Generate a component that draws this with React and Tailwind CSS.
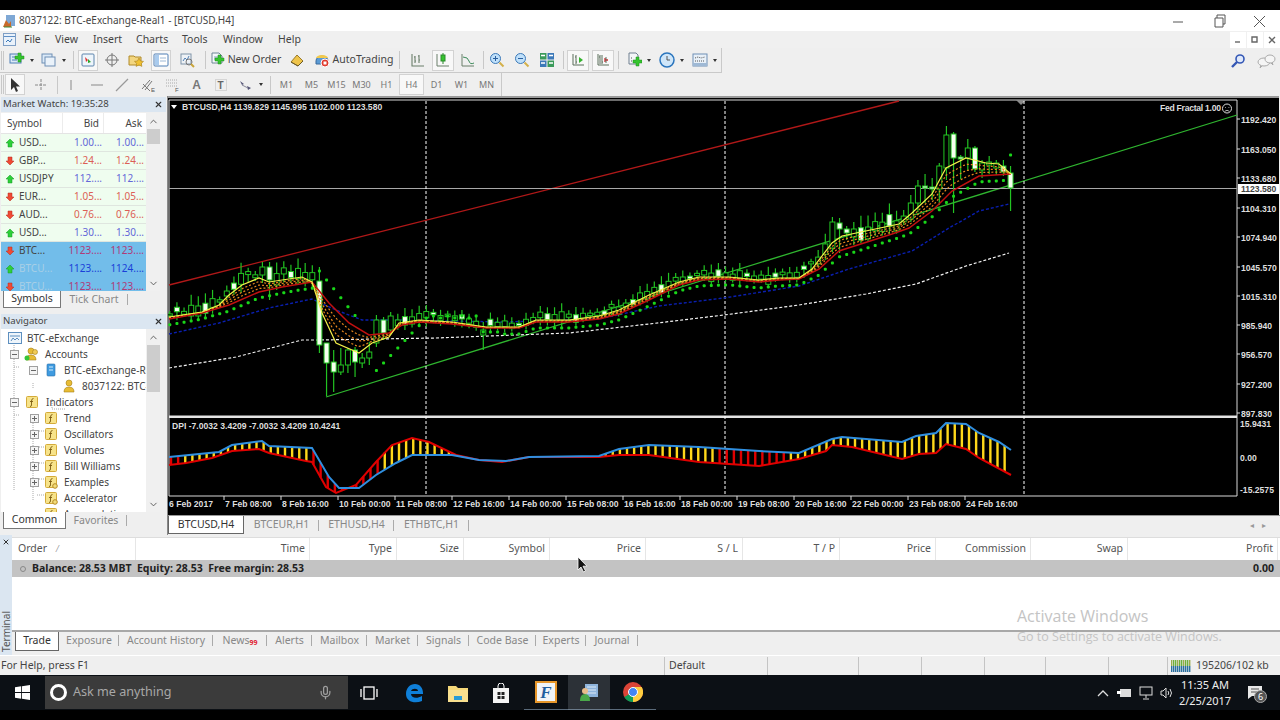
import React from "react";
import { X, ChevronUp, ChevronDown, Mic } from "lucide-react";

// --- chart data, all in page pixels (the svg viewBox starts at 169,96) ---
const YELLOW = [[170,317],[203,312],[220,305],[230,295],[243,285],[260,278],[270,282],[303,277],[313,282],[323,313],[337,343],[360,353],[373,343],[390,337],[400,323],[420,320],[453,322],[487,327],[520,327],[537,320],[570,320],[600,316],[620,310],[650,295],[680,282],[700,277],[730,277],[760,280],[780,278],[800,278],[813,269],[833,243],[843,236],[900,224],[913,213],[933,194],[947,168],[967,158],[987,163],[1000,164],[1012,174]];
const RED = [[170,319],[203,313],[230,305],[260,292],[283,287],[313,282],[330,303],[350,323],[370,335],[390,333],[403,325],[420,322],[453,324],[487,328],[520,328],[537,322],[570,322],[600,319],[620,314],[650,300],[680,285],[700,280],[730,279],[760,282],[780,280],[800,279],[820,269],[840,251],[893,234],[910,228],[933,211],[953,191],[980,176],[1012,174]];
const BLUE = [[170,334],[220,323],[270,308],[313,299],[337,310],[363,320],[403,320],[503,322],[600,319],[660,306],[725,298],[800,286],[850,269],[913,251],[950,228],[980,211],[1010,204]];
const WHITE = [[170,368],[237,357],[303,340],[320,340],[437,338],[570,333],[650,324],[725,315],[800,305],[867,294],[917,284],[967,266],[1010,253]];
const IND_BLUE = [[170,457],[220,452],[233,445],[263,441],[270,446],[313,448],[330,477],[340,488],[360,488],[377,475],[397,463],[413,455],[453,455],[480,460],[507,461],[530,457],[600,456],[620,449],[650,445],[700,447],[760,451],[800,453],[833,439],[843,437],[903,442],[917,436],[937,433],[947,423],[967,424],[980,433],[1000,442],[1012,450]];
const IND_RED = [[170,465],[187,463],[213,458],[233,451],[260,449],[270,453],[307,461],[313,462],[327,487],[337,493],[357,485],[377,462],[393,445],[413,438],[430,442],[457,455],[480,460],[503,462],[530,457],[600,457],[620,455],[650,455],[700,462],[760,466],[800,459],[827,451],[833,445],[853,447],[903,459],[920,454],[937,453],[947,444],[967,449],[980,458],[1012,475]];

const at = (pts, x) => {
  if (x <= pts[0][0]) return pts[0][1];
  for (let i = 1; i < pts.length; i++) {
    if (x <= pts[i][0]) {
      const t = (x - pts[i - 1][0]) / (pts[i][0] - pts[i - 1][0]);
      return pts[i - 1][1] + t * (pts[i][1] - pts[i - 1][1]);
    }
  }
  return pts[pts.length - 1][1];
};
const line = (pts) => pts.map((p) => p.join(",")).join(" ");
const sampled = (fn, x0, x1) => {
  const out = [];
  for (let x = x0; x <= x1; x += 3) out.push([x, fn(x)]);
  return out;
};

const BARS = 119;
const barX = (i) => 170.8 + i * 7.125;

// hand read candles: x -> [top, bottom, wickTop, wickBottom, white]
const SPECIAL = {
  262: [267, 275, 262, 283, false], 269: [267, 280, 262, 300, true], 319: [281, 345, 267, 353, true],
  326: [343, 363, 343, 396, true], 333: [362, 372, 350, 392, true], 340: [365, 372, 348, 375, false],
  347: [350, 365, 348, 373, false], 354: [350, 362, 347, 377, true], 361: [358, 363, 353, 368, false],
  368: [352, 358, 342, 365, false], 376: [320, 343, 315, 347, false], 383: [320, 333, 317, 340, true],
  390: [316, 330, 312, 335, false], 483: [330, 335, 322, 350, false],
  833: [222, 248, 217, 252, false], 840: [223, 229, 218, 253, true], 847: [229, 233, 226, 240, true], 854: [229, 237, 222, 245, false],
  912: [203, 219, 195, 222, false], 919: [186, 203, 180, 212, false], 926: [186, 188, 174, 203, true], 933: [187, 189, 178, 200, true],
  940: [166, 189, 163, 205, false], 947: [135, 168, 126, 180, false], 954: [134, 158, 132, 213, true], 961: [157, 159, 155, 179, true],
  968: [148, 158, 139, 171, false], 976: [148, 169, 146, 172, true], 983: [163, 170, 160, 178, false], 990: [162, 165, 156, 174, false],
  997: [163, 168, 160, 175, false], 1004: [166, 172, 160, 176, true], 1011: [173, 188, 166, 211, true],
};

const candles = () => {
  const out = [];
  for (let i = 0; i < BARS; i++) {
    const x = barX(i);
    const key = Object.keys(SPECIAL).find((k) => Math.abs(k - x) < 3.6);
    let c;
    if (key) c = SPECIAL[key];
    else {
      const m = at(YELLOW, x);
      const a = Math.sin(i * 12.9898) * 43758.5453;
      const r = a - Math.floor(a);
      const b = Math.sin(i * 78.233) * 12543.17;
      const s = b - Math.floor(b);
      const big = x > 820 && x < 900 ? 1.5 : x > 190 && x < 315 ? 1.6 : 1;
      const top = m - 3 - r * 6 * big;
      const bot = top + 2 + s * 7 * big;
      c = [top, bot, top - 3 - s * 6 * big, bot + 2 + r * 7, i % 4 === 1];
    }
    out.push({ x, c });
  }
  return out;
};

const sarDots = () => {
  const out = [];
  for (let i = 0; i < BARS; i++) {
    const x = barX(i);
    let y;
    if (x < 316) y = at(RED, x) + 6;
    else if (x < 360) y = 268 + (x - 318) * 1.25;
    else if (x < 375) continue;
    else if (x < 425) y = 373 - (x - 375) * 1.05;
    else if (x < 480) y = 318 - (i % 2) * 2;
    else if (x < 500) y = 332;
    else if (x < 1005) y = at(RED, x) + 6;
    else y = 155;
    out.push([x, y]);
  }
  return out;
};

const PRICES = [["1192.420",120],["1163.050",150],["1133.680",179],["1104.310",209],["1074.940",238],["1045.570",268],["1015.310",297],["985.940",326],["956.570",355],["927.200",385],["897.830",414]];
const DATES = ["7 Feb 08:00","8 Feb 16:00","10 Feb 00:00","11 Feb 08:00","12 Feb 16:00","14 Feb 00:00","15 Feb 08:00","16 Feb 16:00","18 Feb 00:00","19 Feb 08:00","20 Feb 16:00","22 Feb 00:00","23 Feb 08:00","24 Feb 16:00"];

const Chart = () => {
  const labelFont = { fontFamily: "'Liberation Sans', sans-serif", fontSize: 8.6, fill: "#dedede", fontWeight: 700 };
  const bars = [];
  for (let x = 172; x <= 1012; x += 7.125) {
    const a = at(IND_BLUE, x);
    const b = at(IND_RED, x);
    const isRed = x < 186 || (x > 313 && x < 385) || (x > 455 && x < 600) || (x > 715 && x < 790) || x > 1008;
    bars.push(<line key={x} x1={x} x2={x} y1={a} y2={b} stroke={isRed ? "#e00000" : "#ffd81a"} strokeWidth="2.4" />);
  }
  return (
    <svg width="1111" height="419" viewBox="169 96 1111 419" className="block">
      <rect x="169" y="96" width="1111" height="419" fill="#000" />
      <rect x="169" y="96" width="1111" height="2" fill="#9a9a9a" />
      <polyline points="170,100 1238,100 1238,496 170,496 170,100" fill="none" stroke="#d8d8d8" strokeWidth="1" />
      <rect x="170" y="415.5" width="1068" height="2.5" fill="#e4e4e4" />
      <path d="M1017 100h10l-5 5z" fill="#8a8a8a" />

      <line x1="170" y1="285" x2="900" y2="101" stroke="#b01818" strokeWidth="1.3" />
      <line x1="327" y1="397" x2="1238" y2="115" stroke="#2fb52f" strokeWidth="1.3" />
      <line x1="170" y1="188.5" x2="1238" y2="188.5" stroke="#a8a8a8" strokeWidth="1" />
      {[427, 726, 1025].map((x) => (
        <line key={x} x1={x} x2={x} y1="101" y2="496" stroke="#fff" strokeWidth="1" strokeDasharray="3 2" />
      ))}

      <polyline points={line(BLUE)} fill="none" stroke="#0a1fb0" strokeWidth="1.4" strokeDasharray="3 2" />
      <polyline points={line(WHITE)} fill="none" stroke="#f2f2f2" strokeWidth="1.2" strokeDasharray="3 2" />

      {candles().map(({ x, c }) => (
        <g key={x}>
          <line x1={x} x2={x} y1={c[2]} y2={c[3]} stroke="#22c322" strokeWidth="1.2" />
          <rect x={x - 2.5} y={c[0]} width="5" height={c[1] - c[0]} fill={c[4] ? "#f6fff0" : "#000"} stroke="#22c322" strokeWidth="1" />
        </g>
      ))}

      {[0.25, 0.5, 0.75].map((t) => (
        <polyline key={t} points={line(sampled((x) => at(YELLOW, x) + (at(RED, x) - at(YELLOW, x)) * t, 170, 1012))} fill="none" stroke="#e8871e" strokeWidth="1.2" strokeDasharray="2 2" />
      ))}
      <polyline points={line(RED)} fill="none" stroke="#c01010" strokeWidth="1.5" />
      <polyline points={line(YELLOW)} fill="none" stroke="#f4f04a" strokeWidth="1.2" />
      {sarDots().map(([x, y]) => (
        <rect key={x} x={x - 1.5} y={y - 1.5} width="3" height="3" rx="1" fill="#19d619" />
      ))}

      <text x="183" y="110" {...labelFont}>BTCUSD,H4  1139.829 1145.995 1102.000 1123.580</text>
      <path d="M172 105h6l-3 4z" fill="#fff" />
      <text x="1161" y="111" {...labelFont} textLength="61">Fed Fractal 1.00</text>
      <circle cx="1228" cy="108.500" r="4.500" fill="none" stroke="#ddd" />
      <path d="M1226 107.500h.8M1229.500 107.500h.8M1225.800 111.300q2.200-2 4.500 0" stroke="#ddd" fill="none" strokeWidth=".8" />

      <text x="173" y="429" {...labelFont}>DPI -7.0032 3.4209 -7.0032 3.4209 10.4241</text>
      {bars}
      <polyline points={line(IND_RED)} fill="none" stroke="#e00000" strokeWidth="2" />
      <polyline points={line(IND_BLUE)} fill="none" stroke="#2f8fe0" strokeWidth="2" />

      {PRICES.map(([p, y]) => (
        <g key={p}>
          <line x1="1238" x2="1241" y1={y - 1} y2={y - 1} stroke="#ddd" />
          <text x="1242" y={y + 3} {...labelFont}>{p}</text>
        </g>
      ))}
      <rect x="1239" y="184" width="41" height="10" fill="#fff" />
      <text x="1242" y="192" {...labelFont} fill="#444">1123.580</text>
      <text x="1241" y="427" {...labelFont}>15.9431</text>
      <text x="1241" y="461" {...labelFont}>0.00</text>
      <text x="1241" y="493" {...labelFont}>-15.2575</text>

      <text x="170" y="507" {...labelFont}>6 Feb 2017</text>
      {DATES.map((d, i) => {
        const x = 226 + i * 57;
        return (
          <g key={d}>
            <line x1={x - 1} x2={x - 1} y1="496" y2="500" stroke="#ddd" />
            <text x={x} y="507" {...labelFont}>{d}</text>
          </g>
        );
      })}
    </svg>
  );
};

// --- toolbar icons ---
const S = ({ children, w = 16, h = 16 }) => (
  <svg width={w} height={h} viewBox={`0 0 ${w} ${h}`}>{children}</svg>
);
const Plus = ({ x = 8, y = 8 }) => (
  <path d={`M${x} ${y}h3v-3h3v3h3v3h-3v3h-3v-3h-3z`} transform="translate(-2 -2)" fill="#35c42e" stroke="#1c8f1c" strokeWidth=".5" />
);
const ICONS = {
  newChart: <S><rect x="1" y="2" width="11" height="9" fill="#dbe9f7" stroke="#4f7fb5" /><path d="M3 5h7M3 8h5" stroke="#4f7fb5" /><Plus x={8} y={6} /></S>,
  profiles: <S><rect x="1" y="2" width="10" height="9" fill="#dbe9f7" stroke="#6f8fb5" /><rect x="4" y="5" width="10" height="9" fill="#eaf2fa" stroke="#6f8fb5" /></S>,
  market: <S><rect x="2" y="2" width="12" height="12" rx="1" fill="#eef5fb" stroke="#5d84ad" /><path d="M5 5l3 3-2 2z" fill="#d33" /><path d="M8 7l3 3-3 1z" fill="#2aa52a" /></S>,
  cross: <S><circle cx="8" cy="8" r="5" fill="none" stroke="#777" /><path d="M8 1v14M1 8h14" stroke="#777" /></S>,
  navigator: <S><path d="M1 4h5l1 1h6v8H1z" fill="#f3d680" stroke="#b08a2a" /><path d="M11 6l1.500 3 3 .4-2.200 2 .6 3-2.900-1.500-2.900 1.500.6-3-2.200-2 3-.4z" fill="#f1c232" stroke="#a8801c" strokeWidth=".6" /></S>,
  terminal: <S><rect x="1" y="2" width="14" height="12" rx="1" fill="#fff" stroke="#4f7fb5" /><rect x="2" y="3" width="4" height="10" fill="#a9cbee" /><path d="M7 6h6M7 9h6" stroke="#9db8d5" /></S>,
  tester: <S><rect x="2" y="2" width="10" height="10" fill="#eef2f6" stroke="#7f93a8" /><path d="M4 9l2-3 2 2 2-4" fill="none" stroke="#4f7fb5" /><circle cx="10" cy="10" r="3" fill="none" stroke="#777" /><path d="M12 12l3 3" stroke="#c9a53a" strokeWidth="2" /></S>,
  order: <S><path d="M3 1h7l3 3v7H3z" fill="#f4f8fb" stroke="#6f8796" /><path d="M5 5h5M5 7h5" stroke="#7f9fb5" /><Plus x={8} y={8} /></S>,
  editor: <S><path d="M2 10l6-7 6 6-5 5z" fill="#efc44a" stroke="#9a7a2a" /><path d="M2 10l7 4 5-5" fill="none" stroke="#6a5a2a" /></S>,
  auto: <S><path d="M2 9a6 5 0 0 1 12 0v3H2z" fill="#5b9bd5" stroke="#3b6a9c" /><path d="M2 6a6 3 0 0 1 12 0" fill="#f2c94c" /><circle cx="11" cy="11" r="4" fill="#e03a2e" stroke="#fff" /><rect x="9.500" y="9.500" width="3" height="3" fill="#fff" /></S>,
  bars: <S><path d="M2 2v12h12M5 4v7M4 5h1M5 9h1M9 3v8M8 4h1M9 8h1" fill="none" stroke="#6b7f6b" strokeWidth="1.100" /></S>,
  candle: <S><path d="M2 2v12h12" fill="none" stroke="#6b7f6b" /><path d="M8 1v11" stroke="#2a8a2a" /><rect x="6" y="3" width="4" height="6" fill="#35c42e" stroke="#2a8a2a" /></S>,
  lineChart: <S><path d="M2 2v12h12" fill="none" stroke="#6b7f6b" /><path d="M3 5q5 0 6 4t5 2" fill="none" stroke="#3c8a5a" /></S>,
  zoomIn: <S><circle cx="6.500" cy="6.500" r="5" fill="#bfe0fa" stroke="#3c79b8" /><path d="M4 6.500h5M6.500 4v5" stroke="#2a5f9f" /><path d="M10.500 10.500l4 4" stroke="#d3b04a" strokeWidth="2" /></S>,
  zoomOut: <S><circle cx="6.500" cy="6.500" r="5" fill="#bfe0fa" stroke="#3c79b8" /><path d="M4 6.500h5" stroke="#2a5f9f" /><path d="M10.500 10.500l4 4" stroke="#d3b04a" strokeWidth="2" /></S>,
  tile: <S><rect x="1" y="1" width="6.500" height="6.500" fill="#3a9a5a" /><rect x="8.500" y="1" width="6.500" height="6.500" fill="#3c79b8" /><rect x="1" y="8.500" width="6.500" height="6.500" fill="#3c79b8" /><rect x="8.500" y="8.500" width="6.500" height="6.500" fill="#3a9a5a" /><path d="M2 3.500h4M10 3.500h4M2 11h4M10 11h4" stroke="#fff" strokeWidth="1.500" /></S>,
  autoscroll: <S><path d="M3 2v11h11M6 3v9M5 5h1M6 10h1" fill="none" stroke="#5a6f5a" /><path d="M9 5l4 3-4 3z" fill="#35b42e" /></S>,
  shift: <S><path d="M3 2v11h11M5 3v9M4 5h1M7 3v9M7 10h1" fill="none" stroke="#5a6f5a" /><path d="M13 8h-3M10 6v4" stroke="#d3262e" strokeWidth="1.300" /><path d="M11 5v6" stroke="#5a6f5a" /></S>,
  template: <S><path d="M3 1h7l2 2v9H3z" fill="#f4f6f8" stroke="#6f7f8f" /><path d="M5 6h1M5 9h1" stroke="#555" /><Plus x={9} y={10} /></S>,
  clock: <S><circle cx="8" cy="8" r="7" fill="#cfe6f9" stroke="#2a75bd" strokeWidth="1.500" /><path d="M8 4v4h3" fill="none" stroke="#555" /></S>,
  period: <S><rect x="1" y="2" width="14" height="12" fill="#e8f0f8" stroke="#6f8fb5" /><path d="M3 6l3-1 3 1 4-1M3 9h10" fill="none" stroke="#555" strokeDasharray="1 1" /><rect x="1" y="11" width="14" height="3" fill="#9fb9d5" /></S>,
  arrow: <S><path d="M4 1v12l3-3 2 5 2-1-2-4.500h4z" fill="#333" /></S>,
  crossThin: <S><path d="M8 2v12M2 8h12" stroke="#888" strokeDasharray="3 1" /></S>,
  vline: <S><path d="M8 3v10" stroke="#999" strokeWidth="1.200" /></S>,
  hline: <S><path d="M2 8h12" stroke="#999" strokeWidth="1.200" /></S>,
  trend: <S><path d="M2 14L14 2" stroke="#999" strokeWidth="1.200" /></S>,
  channel: <S><path d="M2 12L10 3M5 13l7-9M3 7l7 7" stroke="#777" /><text x="11" y="15" fontSize="6" fill="#555" fontFamily="Liberation Sans">E</text></S>,
  fib: <S><path d="M2 3h11M2 6h11M2 9h11" stroke="#aaa" strokeDasharray="1 1" /><text x="11" y="15" fontSize="6" fill="#555" fontFamily="Liberation Sans">F</text></S>,
  a: <span className="text-[12px] font-bold text-[#777] font-['Liberation_Sans']">A</span>,
  t: <S><rect x="2.500" y="2.500" width="11" height="11" fill="none" stroke="#bbb" strokeDasharray="1 1" /><text x="4.500" y="12" fontSize="10" fontWeight="700" fill="#666" fontFamily="Liberation Sans">T</text></S>,
  arrows: <S><path d="M2 4l4 3-2 1zM9 9l4 2-3 2z" fill="#557" /><path d="M4 8l6 3" stroke="#889" /></S>,
};

const Drop = () => <span className="ml-[3px] w-0 h-0 border-x-[2.5px] border-x-transparent border-t-[3px] border-t-[#333]" />;
const Sep = ({ c = "w-[9px]" }) => (
  <span className={`${c} h-full flex items-center justify-center shrink-0`}>
    <span className="w-[1px] h-[18px] bg-[#c8c8c8] shrink-0" />
  </span>
);

const Tool = ({ icon, w, on, drop, label }) => (
  <span className={`${w} h-[21px] flex items-center justify-center shrink-0 gap-[2px] ${on ? "bg-[#f8f8f8] border border-[#d2d2d2]" : ""}`}>
    {ICONS[icon]}
    {label && <span className="text-[10.5px] text-[#444] ml-[1px] whitespace-nowrap">{label}</span>}
    {drop && <Drop />}
  </span>
);

const Grip = () => <span className="w-[3px] h-[19px] ml-[1px] mr-[1px] border-x border-[#c8c8c8] shrink-0" />;

const Toolbar1 = () => (
  <div className="h-[25px] bg-[#efefef] flex items-center">
    <div className="flex items-center h-[25px] border-r border-b border-[#c9c9c9]">
      <Grip />
      <Tool icon="newChart" w="w-[33px]" drop />
      <Tool icon="profiles" w="w-[31px]" drop />
      <Sep c="w-[9px]" />
      <Tool icon="market" w="w-[20px]" on />
      <Tool icon="cross" w="w-[27px]" />
      <Tool icon="navigator" w="w-[22px]" />
      <span className="w-[4px] shrink-0" />
      <Tool icon="terminal" w="w-[20px]" on />
      <Tool icon="tester" w="w-[32px]" />
      <Sep c="w-[5px]" />
      <Tool icon="order" w="w-[74px]" label="New Order" />
      <Tool icon="editor" w="w-[30px]" />
      <Tool icon="auto" w="w-[83px]" label="AutoTrading" />
      <Sep c="w-[9px]" />
      <Tool icon="bars" w="w-[28px]" />
      <Tool icon="candle" w="w-[22px]" on />
      <Tool icon="lineChart" w="w-[28px]" />
      <Sep c="w-[3px]" />
      <Tool icon="zoomIn" w="w-[24px]" />
      <Tool icon="zoomOut" w="w-[26px]" />
      <Tool icon="tile" w="w-[24px]" />
      <Sep c="w-[8px]" />
      <Tool icon="autoscroll" w="w-[22px]" on />
      <span className="w-[3px] shrink-0" />
      <Tool icon="shift" w="w-[22px]" on />
      <Sep c="w-[8px]" />
      <Tool icon="template" w="w-[32px]" drop />
      <Tool icon="clock" w="w-[34px]" drop />
      <Tool icon="period" w="w-[33px]" drop />
    </div>
    <div className="ml-auto flex items-center gap-[10px] pr-[4px]">
      <svg width="16" height="16" viewBox="0 0 16 16"><circle cx="10" cy="6" r="4" fill="#dfe9fb" stroke="#3457b5" strokeWidth="1.600" /><path d="M7 9l-5 5" stroke="#3457b5" strokeWidth="2.400" /></svg>
      <svg width="20" height="16" viewBox="0 0 20 16"><ellipse cx="8" cy="9" rx="6" ry="4" fill="#f5f5f5" stroke="#aaa" /><ellipse cx="14" cy="6" rx="5" ry="4" fill="#f5f5f5" stroke="#aaa" /><path d="M6 13l-2 2 1-3M15 10l2 2-1-3" fill="#eee" stroke="#aaa" /></svg>
    </div>
  </div>
);

const TF = ({ t, on }) => (
  <span className={`w-[25px] h-[21px] flex items-center justify-center shrink-0 text-[9px] text-[#777] ${on ? "bg-[#f8f8f8] border border-[#d2d2d2]" : ""}`}>{t}</span>
);

const Toolbar2 = () => (
  <div className="h-[23px] bg-[#efefef] flex items-center">
    <div className="flex items-center h-[23px] border-r border-[#c9c9c9]">
      <Grip />
      <Tool icon="arrow" w="w-[20px]" on />
      <Tool icon="crossThin" w="w-[31px]" />
      <Sep c="w-[2px]" />
      <Tool icon="vline" w="w-[26px]" />
      <Tool icon="hline" w="w-[25px]" />
      <Tool icon="trend" w="w-[26px]" />
      <Tool icon="channel" w="w-[25px]" />
      <Tool icon="fib" w="w-[24px]" />
      <Tool icon="a" w="w-[25px]" />
      <Tool icon="t" w="w-[24px]" />
      <Tool icon="arrows" w="w-[34px]" drop />
      <Sep c="w-[7px]" />
      <TF t="M1" />
      <TF t="M5" />
      <TF t="M15" />
      <TF t="M30" />
      <TF t="H1" />
      <TF t="H4" on />
      <TF t="D1" />
      <TF t="W1" />
      <TF t="MN" />
      <span className="w-[2px]" />
    </div>
  </div>
);

const PanelHead = ({ title }) => (
  <div className="h-[15px] flex items-center bg-[#dbe6f1] ml-[1px] mr-[1px] pl-[2px] text-[9.6px] text-[#444] shrink-0">
    <span className="flex-1">{title}</span>
    <X size={9} strokeWidth={3} className="text-[#333] mr-[3px]" />
  </div>
);

const ScrollBar = ({ thumb }) => (
  <div className="w-[14px] flex flex-col items-center bg-[#f0f0f0] shrink-0">
    <ChevronUp size={11} strokeWidth={2} className="text-[#555] mt-[3px] mb-[2px]" />
    <div className={`${thumb} w-[13px] bg-[#cdcdcd]`} />
    <ChevronDown size={11} strokeWidth={2} className="text-[#555] mt-auto mb-[2px]" />
  </div>
);

const BlockArrow = ({ up }) => (
  <svg width="10" height="10" viewBox="0 0 10 10" className="shrink-0">
    {up ? <path d="M5 1l4 4H7v4H3V5H1z" fill="#2ecf3a" stroke="#179a24" strokeWidth=".5" /> : <path d="M5 9L1 5h2V1h4v4h2z" fill="#ef4a34" stroke="#b52a1c" strokeWidth=".5" />}
  </svg>
);

const QUOTES = [
  ["USD...", "1.00...", "1.00...", true, 0],
  ["GBP...", "1.24...", "1.24...", false, 0],
  ["USDJPY", "112....", "112....", true, 0],
  ["EUR...", "1.05...", "1.05...", false, 0],
  ["AUD...", "0.76...", "0.76...", false, 0],
  ["USD...", "1.30...", "1.30...", true, 0],
  ["BTC...", "1123....", "1123....", false, 1],
  ["BTCU...", "1123....", "1124....", true, 2],
  ["BTCU...", "1123....", "1123....", false, 2],
];

const MarketWatch = () => (
  <div className="h-[211px] flex flex-col">
    <PanelHead title="Market Watch: 19:35:28" />
    <div className="h-[178px] flex ml-[1px] mt-[1px] overflow-hidden">
      <div className="w-[145px] overflow-hidden bg-white text-[10px]">
        <div className="h-[21px] flex items-center text-[#444] border-b border-[#e4e4e4]">
          <span className="w-[62px] pl-[6px] border-r border-[#ececec] h-full flex items-center">Symbol</span>
          <span className="w-[41px] pr-[4px] text-right border-r border-[#ececec] h-full flex items-center justify-end">Bid</span>
          <span className="w-[42px] pr-[4px] flex items-center justify-end">Ask</span>
        </div>
        {QUOTES.map(([s, b, a, up, sel], i) => {
          const bg = sel ? "bg-[#72bdea] border-[#72bdea]" : "bg-[#effdef] border-[#dfe6df]";
          const sym = sel === 2 ? "text-[#a8cfe6]" : "text-[#444]";
          const col = sel ? (up ? "text-[#1a3fd8]" : "text-[#b03a78]") : up ? "text-[#6467d8]" : "text-[#dc5f55]";
          return (
            <div key={i} className={`h-[18px] flex items-center border-b ${bg}`}>
              <span className={`w-[62px] pl-[4px] flex items-center gap-[4px] ${sym}`}><BlockArrow up={up} />{s}</span>
              <span className={`w-[41px] pr-[2px] text-right ${col}`}>{b}</span>
              <span className={`w-[42px] pr-[2px] text-right ${col}`}>{a}</span>
            </div>
          );
        })}
      </div>
      <ScrollBar thumb="h-[15px]" />
    </div>
    <div className="h-[17px] flex items-start pl-[3px] text-[10.5px]">
      <span className="w-[58px] h-[17px] bg-white border-x border-b border-[#777] rounded-b-[1px] flex items-center justify-center text-[#333]">Symbols</span>
      <span className="w-[66px] text-center text-[#888] leading-[16px]">Tick Chart</span>
      <span className="w-[1px] h-[11px] mt-[3px] bg-[#aaa]" />
    </div>
  </div>
);

const Box = ({ plus }) => (
  <svg width="9" height="9" viewBox="0 0 9 9" className="shrink-0">
    <rect x=".5" y=".5" width="8" height="8" fill="#f4f4f4" stroke="#a0a0a0" />
    <path d={plus ? "M2 4.500h5M4.500 2v5" : "M2 4.500h5"} stroke="#666" />
  </svg>
);

const FBox = ({ dot }) => (
  <svg width="13" height="13" viewBox="0 0 13 13" className="shrink-0">
    <rect x=".5" y=".5" width="11" height="11" rx="1" fill="#f7e38a" stroke="#d4ab3a" />
    <path d="M7.500 2.500Q5.500 2.500 5.500 5v4Q5.500 10.500 4 10.500M4 5.500h3" fill="none" stroke="#7a5a10" strokeWidth=".9" />
    {dot && <circle cx="10" cy="10" r="2.300" fill="#f2dc7a" stroke="#b58a24" />}
  </svg>
);

const Users = () => (
  <svg width="16" height="14" viewBox="0 0 16 14" className="shrink-0">
    <circle cx="7" cy="4" r="3" fill="#e8bc34" stroke="#a5801a" strokeWidth=".6" />
    <path d="M2 13q0-5 5-5t5 5z" fill="#e8bc34" stroke="#a5801a" strokeWidth=".6" />
    <circle cx="11" cy="5" r="2.500" fill="#f1cc58" stroke="#a5801a" strokeWidth=".6" />
    <circle cx="3" cy="11" r="2.500" fill="#36c43a" />
  </svg>
);

const Person = () => (
  <svg width="12" height="14" viewBox="0 0 12 14" className="shrink-0">
    <circle cx="6" cy="4" r="3" fill="#e8bc34" stroke="#a5801a" strokeWidth=".6" />
    <path d="M1 13q0-5 5-5t5 5z" fill="#e8bc34" stroke="#a5801a" strokeWidth=".6" />
  </svg>
);

const Server = () => (
  <svg width="10" height="14" viewBox="0 0 10 14" className="shrink-0">
    <rect x="1" y="1" width="8" height="12" rx="1" fill="#3f9be0" stroke="#2a6fa8" strokeWidth=".6" />
    <path d="M3 4h4M3 7h4" stroke="#d6ecfb" />
  </svg>
);

const RootIcon = () => (
  <svg width="14" height="13" viewBox="0 0 14 13" className="shrink-0">
    <rect x=".5" y=".5" width="13" height="11" fill="#eef5fb" stroke="#5d8fbf" />
    <path d="M2 4h10" stroke="#5d8fbf" />
    <path d="M3 9l2-3 2 2 2-2 2 2" fill="none" stroke="#5d8fbf" />
  </svg>
);

const TREE = [
  { pl: "pl-[7px]", gap: "gap-[5px]", icon: <RootIcon />, t: "BTC-eExchange" },
  { pl: "pl-[9px]", gap: "gap-[5px]", box: "minus", icon: <Users />, t: "Accounts" },
  { pl: "pl-[28px]", gap: "gap-[8px]", box: "minus", icon: <Server />, t: "BTC-eExchange-Real1" },
  { pl: "pl-[62px]", gap: "gap-[7px]", icon: <Person />, t: "8037122: BTC-eExchange" },
  { pl: "pl-[9px]", gap: "gap-[7px]", box: "minus", icon: <FBox />, t: "Indicators" },
  { pl: "pl-[29px]", gap: "gap-[6px]", box: "plus", icon: <FBox />, t: "Trend" },
  { pl: "pl-[29px]", gap: "gap-[6px]", box: "plus", icon: <FBox />, t: "Oscillators" },
  { pl: "pl-[29px]", gap: "gap-[6px]", box: "plus", icon: <FBox />, t: "Volumes" },
  { pl: "pl-[29px]", gap: "gap-[6px]", box: "plus", icon: <FBox />, t: "Bill Williams" },
  { pl: "pl-[29px]", gap: "gap-[6px]", box: "plus", icon: <FBox dot />, t: "Examples" },
  { pl: "pl-[44px]", gap: "gap-[6px]", icon: <FBox dot />, t: "Accelerator" },
  { pl: "pl-[44px]", gap: "gap-[6px]", icon: <FBox dot />, t: "Accumulation" },
];

const Navigator = () => (
  <div className="flex-1 flex flex-col">
    <PanelHead title="Navigator" />
    <div className="h-[183px] flex ml-[1px] overflow-hidden">
      <div className="relative w-[145px] bg-white overflow-hidden pt-[1px] text-[10px] text-[#444]">
        <svg width="145" height="183" className="absolute left-0 top-0">
          <path d="M13 16v146M13 38h6M13 86h6M32 54v6M32 60h0M32 92v80M36 102h8M36 118h8M36 134h8M36 150h8M36 166h8M51 70v10h14" fill="none" stroke="#aaa" strokeDasharray="1 1" />
        </svg>
        {TREE.map((r) => (
          <div key={r.t} className={`relative h-[16px] flex items-center whitespace-nowrap ${r.pl} ${r.gap}`}>
            {r.box && <Box plus={r.box === "plus"} />}
            {r.icon}
            <span>{r.t}</span>
          </div>
        ))}
      </div>
      <ScrollBar thumb="h-[47px]" />
    </div>
    <div className="h-[17px] flex items-start pl-[3px] text-[10.5px]">
      <span className="w-[63px] h-[17px] bg-white border-x border-b border-[#777] flex items-center justify-center text-[#333]">Common</span>
      <span className="w-[60px] text-center text-[#888] leading-[16px]">Favorites</span>
      <span className="w-[1px] h-[11px] mt-[3px] bg-[#aaa]" />
    </div>
  </div>
);

const CHART_TABS = [
  { t: "BTCEUR,H1", w: "w-[75px]" },
  { t: "ETHUSD,H4", w: "w-[75px]" },
  { t: "ETHBTC,H1", w: "w-[75px]" },
];

const ChartTabs = () => (
  <div className="h-[20px] flex items-start bg-[#efefef] text-[10.5px] border-t border-[#999]">
    <span className="w-[76px] h-[18px] bg-white border-x border-b border-[#666] flex items-center justify-center text-[#333]">BTCUSD,H4</span>
    {CHART_TABS.map((c) => (
      <span key={c.t} className={`${c.w} h-[18px] flex items-center justify-center text-[#888] relative`}>
        {c.t}
        <span className="absolute right-0 top-[4px] w-[1px] h-[11px] bg-[#aaa]" />
      </span>
    ))}
    <span className="ml-auto mr-[6px] mt-[3px] text-[8px] text-[#999] tracking-[8px]">◂▸</span>
  </div>
);

const COLS = [
  { t: "Time", w: "w-[174px]" },
  { t: "Type", w: "w-[87px]" },
  { t: "Size", w: "w-[67px]" },
  { t: "Symbol", w: "w-[86px]" },
  { t: "Price", w: "w-[96px]" },
  { t: "S / L", w: "w-[97px]" },
  { t: "T / P", w: "w-[97px]" },
  { t: "Price", w: "w-[96px]" },
  { t: "Commission", w: "w-[95px]" },
  { t: "Swap", w: "w-[97px]" },
  { t: "Profit", w: "w-[150px]" },
];

const TERM_TABS = [
  { t: "Exposure", w: "w-[60px]" },
  { t: "Account History", w: "w-[94px]" },
  { t: "News", w: "w-[54px]", sup: "99" },
  { t: "Alerts", w: "w-[45px]" },
  { t: "Mailbox", w: "w-[55px]" },
  { t: "Market", w: "w-[51px]" },
  { t: "Signals", w: "w-[51px]" },
  { t: "Code Base", w: "w-[67px]" },
  { t: "Experts", w: "w-[50px]" },
  { t: "Journal", w: "w-[52px]" },
];

const Terminal = () => (
  <div className="h-[120px] flex bg-[#efefef]">
    <div className="w-[12px] flex flex-col items-center bg-[#dbe6f1]">
      <X size={8} strokeWidth={3} className="text-[#333] mt-[3px]" />
      <span className="mt-auto mb-[3px] text-[10px] text-[#555] [writing-mode:vertical-rl] rotate-180">Terminal</span>
    </div>
    <div className="flex-1 flex flex-col min-w-0">
      <div className="h-[2px]" />
      <div className="h-[23px] flex items-center bg-white text-[10.5px] text-[#555] border-t border-[#ddd]">
        <span className="w-[124px] h-full pl-[6px] flex items-center gap-[10px] border-r border-[#e6e6e6]">Order <span className="text-[8px] text-[#888]">⁄</span></span>
        {COLS.map((c, i) => (
          <span key={i} className={`${c.w} h-full flex items-center justify-end pr-[4px] border-r border-[#e6e6e6] shrink-0`}>{c.t}</span>
        ))}
      </div>
      <div className="h-[17px] bg-[#c3c3c3] flex items-center text-[10.5px] font-bold text-[#222] pl-[8px]">
        <span className="w-[6px] h-[6px] rounded-full border border-[#888] mr-[6px]" />
        <span className="whitespace-pre">Balance: 28.53 MBT  Equity: 28.53  Free margin: 28.53</span>
        <span className="ml-auto pr-[6px]">0.00</span>
      </div>
      <div className="h-[55px] bg-white border-b-2 border-[#a8a8a8]" />
      <div className="h-[20px] flex items-start pl-[3px] text-[10.5px]">
        <span className="w-[44px] h-[19px] bg-white border-x border-b border-[#666] flex items-center justify-center text-[#333]">Trade</span>
        {TERM_TABS.map((c) => (
          <span key={c.t} className={`${c.w} h-[17px] flex items-center justify-center text-[#888] relative whitespace-nowrap`}>
            {c.t}
            {c.sup && <span className="text-[7px] text-[#e02030] font-bold mt-[6px]">{c.sup}</span>}
            <span className="absolute right-0 top-[3px] w-[1px] h-[11px] bg-[#aaa]" />
          </span>
        ))}
      </div>
    </div>
  </div>
);

const STATUS = ["w-[103px]", "w-[91px]", "w-[63px]", "w-[63px]", "w-[61px]", "w-[63px]", "w-[59px]"];

const StatusBar = () => (
  <div className="h-[20px] flex items-center bg-[#efefef] text-[10.5px] text-[#444] border-t border-[#fff] pt-[1px]">
    <span className="w-[664px] pl-[1px]">For Help, press F1</span>
    {STATUS.map((w, i) => (
      <span key={i} className={`${w} h-full border-l border-[#c4c4c4] pl-[4px] flex items-center`}>{i === 0 ? "Default" : ""}</span>
    ))}
    <span className="h-full border-l border-[#c4c4c4] pl-[3px] flex items-center gap-[5px]">
      <svg width="20" height="12" viewBox="0 0 20 12">
        {[...Array(10)].map((_, i) => (
          <g key={i}>
            <rect x={i * 2} y="0" width="1.400" height="6" fill={i % 3 ? "#6fae3c" : "#9aaa4c"} />
            <rect x={i * 2} y="6" width="1.400" height="6" fill="#2a6f9f" />
          </g>
        ))}
      </svg>
      195206/102 kb
    </span>
  </div>
);

const Taskbar = () => (
  <div className="h-[35px] flex items-center bg-[#0c1015] text-white shrink-0">
    <span className="w-[45px] flex items-center justify-center">
      <svg width="15" height="15" viewBox="0 0 15 15"><path d="M0 2.200l6.200-.9v5.700H0zM7 1.200L15 0v7H7zM0 7.900h6.200v5.800L0 12.800zM7 7.900h8V15l-8-1.200z" fill="#fff" /></svg>
    </span>
    <div className="w-[303px] h-[33px] bg-[#3b3b3b] flex items-center pl-[4px] shrink-0">
      <span className="w-[17px] h-[17px] rounded-full border-[3px] border-white ml-[1px]" />
      <span className="ml-[6px] text-[12.6px] text-[#a8a8a8]">Ask me anything</span>
      <Mic size={15} className="ml-auto mr-[15px] text-[#a0a0a0]" />
    </div>
    <span className="w-[42px] flex items-center justify-center">
      <svg width="18" height="14" viewBox="0 0 18 14"><rect x="4" y="1" width="10" height="12" fill="none" stroke="#fff" strokeWidth="1.300" /><path d="M1 3v8M17 3v8" stroke="#fff" strokeWidth="1.300" /></svg>
    </span>
    <span className="w-[47px] flex items-center justify-center">
      <svg width="20" height="20" viewBox="0 0 20 20"><path d="M2 11C2 5 6 1 11 1c5 0 8 4 8 9v1H7c0 4 6 5 11 2v5c-7 3-16 1-16-7zM7 8h7c0-3-6-3-7 0z" fill="#0f7fd8" /></svg>
    </span>
    <span className="w-[41px] flex items-center justify-center">
      <svg width="20" height="18" viewBox="0 0 20 18"><path d="M0 2h8l2 2h10v14H0z" fill="#f5d87a" /><rect x="0" y="6" width="20" height="12" fill="#f9e08f" /><rect x="6" y="12" width="8" height="4" fill="#2a9bd5" /></svg>
    </span>
    <span className="w-[46px] flex items-center justify-center">
      <svg width="18" height="20" viewBox="0 0 18 20"><path d="M6 5V3a3 3 0 0 1 6 0v2" fill="none" stroke="#fff" /><path d="M1 5h16v15H1z" fill="#f5f5f5" /><rect x="5.500" y="9" width="3" height="3" fill="#222" /><rect x="9.500" y="9" width="3" height="3" fill="#222" /><rect x="5.500" y="13" width="3" height="3" fill="#222" /><rect x="9.500" y="13" width="3" height="3" fill="#222" /></svg>
    </span>
    <span className="w-[44px] h-[35px] flex items-center justify-center border-b border-[#5a6a7a]">
      <span className="w-[22px] h-[22px] bg-[#f0f4f8] border-2 border-[#e6962a] flex items-center justify-center text-[17px] leading-none font-bold italic text-[#1f5f9f] font-['Liberation_Serif']">F</span>
    </span>
    <span className="w-[42px] h-[35px] bg-[#2c3137] flex items-center justify-center border-b border-[#6a7a8a]">
      <svg width="20" height="20" viewBox="0 0 20 20"><rect x="6" y="2" width="13" height="13" fill="#8fb4dc" /><path d="M8 5h9M8 8h9M8 11h9" stroke="#dfeaf5" /><circle cx="6" cy="9" r="3" fill="#e8bc8a" /><path d="M1 19q0-7 5-7t5 7z" fill="#4aa84a" /></svg>
    </span>
    <span className="w-[46px] h-[35px] flex items-center justify-center border-b border-[#5a6a7a]">
      <svg width="20" height="20" viewBox="0 0 20 20"><circle cx="10" cy="10" r="10" fill="#db4437" /><path d="M10 10L1.300 15A10 10 0 0 0 10 20z" fill="#0f9d58" /><path d="M10 5h8.700A10 10 0 0 1 10 20z" fill="#ffcd40" /><circle cx="10" cy="10" r="4.500" fill="#4285f4" stroke="#fff" /></svg>
    </span>
    <div className="ml-auto flex items-center text-[#eee]">
      <svg width="12" height="8" viewBox="0 0 12 8" className="mr-[8px]"><path d="M1 7l5-5 5 5" fill="none" stroke="#ddd" strokeWidth="1.300" /></svg>
      <svg width="14" height="12" viewBox="0 0 14 12" className="mr-[8px]"><rect x="3" y="2" width="11" height="8" fill="#ddd" /><path d="M0 4h4v3H0z" fill="#fff" /></svg>
      <svg width="14" height="14" viewBox="0 0 14 14" className="mr-[7px]"><rect x="1" y="1" width="12" height="8" fill="none" stroke="#ddd" /><path d="M7 9v3M4 13h6" stroke="#ddd" /></svg>
      <svg width="14" height="14" viewBox="0 0 14 14" className="mr-[6px]"><path d="M1 5h2l3-3v10L3 9H1z" fill="none" stroke="#ddd" /><path d="M8 5q1.500 2 0 4M10 3q3 4 0 8" fill="none" stroke="#ddd" /></svg>
      <div className="flex flex-col items-center text-[11px] leading-[16px] w-[50px]">
        <span>11:35 AM</span>
        <span>2/25/2017</span>
      </div>
      <span className="relative w-[50px] flex items-center justify-center">
        <svg width="16" height="15" viewBox="0 0 16 15"><path d="M1 1h14v10H5l-4 3z" fill="#e8e8e8" /><path d="M4 4h8M4 7h8" stroke="#555" /></svg>
        <span className="absolute left-[24px] top-[5px] w-[13px] h-[13px] rounded-full bg-[#555] border border-[#aaa] text-[9px] leading-[11px] text-center text-white">6</span>
      </span>
    </div>
  </div>
);

const App = () => (
  <div className="relative w-[1280px] h-[720px] overflow-hidden bg-black flex flex-col font-['Noto_Sans',sans-serif]">
    <div className="h-[10px] shrink-0" />
    <div className="h-[21px] bg-white flex items-center shrink-0">
      <svg width="14" height="14" viewBox="0 0 14 14" className="ml-[2px]"><rect x="4" y="1" width="9" height="11" fill="#7fa8d5" /><path d="M1 13l3-7 3 4 2-3v6z" fill="#c96a2a" /><path d="M2 13h8" stroke="#3a8a3a" /></svg>
      <span className="ml-[3px] text-[10px] text-[#444]">8037122: BTC-eExchange-Real1 - [BTCUSD,H4]</span>
      <svg width="100" height="16" viewBox="0 0 100 16" className="ml-auto mr-[7px]">
        <path d="M0 9h10" stroke="#555" />
        <path d="M42 5h8v9h-8zM44 5V2h8v9h-2" fill="none" stroke="#555" />
        <path d="M81 3l11 11M92 3L81 14" stroke="#555" />
      </svg>
    </div>
    <div className="h-[17px] bg-[#f0f0f0] flex items-center text-[10.5px] text-[#444] shrink-0 relative">
      <svg width="13" height="13" viewBox="0 0 13 13" className="ml-[3px]"><rect x=".5" y=".5" width="12" height="12" fill="#eaf2fb" stroke="#7f9fc5" /><path d="M1 3.500h11" stroke="#5f8fc5" /><path d="M3 9l2-2 2 2 2-3" fill="none" stroke="#3c79b8" /></svg>
      <span className="ml-[8px] w-[31px]">File</span>
      <span className="w-[38px]">View</span>
      <span className="w-[43px]">Insert</span>
      <span className="w-[46px]">Charts</span>
      <span className="w-[41px]">Tools</span>
      <span className="w-[55px]">Window</span>
      <span>Help</span>
      <div className="ml-auto flex items-center gap-[1px]">
        {["M5 10h5", "M5 5h5v5H5z", "M5 5l6 6M11 5l-6 6"].map((d) => (
          <span key={d} className="w-[16px] h-[16px] bg-white flex items-center justify-center">
            <svg width="16" height="16" viewBox="0 0 16 16"><path d={d} fill="none" stroke="#666" strokeWidth="1.400" /></svg>
          </span>
        ))}
      </div>
    </div>
    <Toolbar1 />
    <Toolbar2 />
    <div className="h-[439px] flex bg-[#efefef] shrink-0">
      <div className="w-[168px] flex flex-col gap-[6px] pt-[1px] shrink-0 border-r border-[#888]">
        <MarketWatch />
        <Navigator />
      </div>
      <div className="flex-1 min-w-0 flex flex-col">
        <Chart />
        <ChartTabs />
      </div>
    </div>
    <Terminal />
    <StatusBar />
    <Taskbar />

    {/* watermark and mouse pointer sit on top of everything */}
    <div className="absolute left-[1017px] top-[605px] text-[#c4c4c4] font-['Open_Sans',sans-serif] pointer-events-none">
      <div className="text-[16px] leading-[22px]">Activate Windows</div>
      <div className="text-[12.5px] leading-[18px] mt-[1px]">Go to Settings to activate Windows.</div>
    </div>
    <svg width="12" height="17" viewBox="0 0 12 17" className="absolute left-[577px] top-[556px]">
      <path d="M1 1v13l3-3 2.500 5 2-1-2.500-4.800h4z" fill="#111" stroke="#fff" strokeWidth=".8" />
    </svg>
  </div>
);

export default App;
